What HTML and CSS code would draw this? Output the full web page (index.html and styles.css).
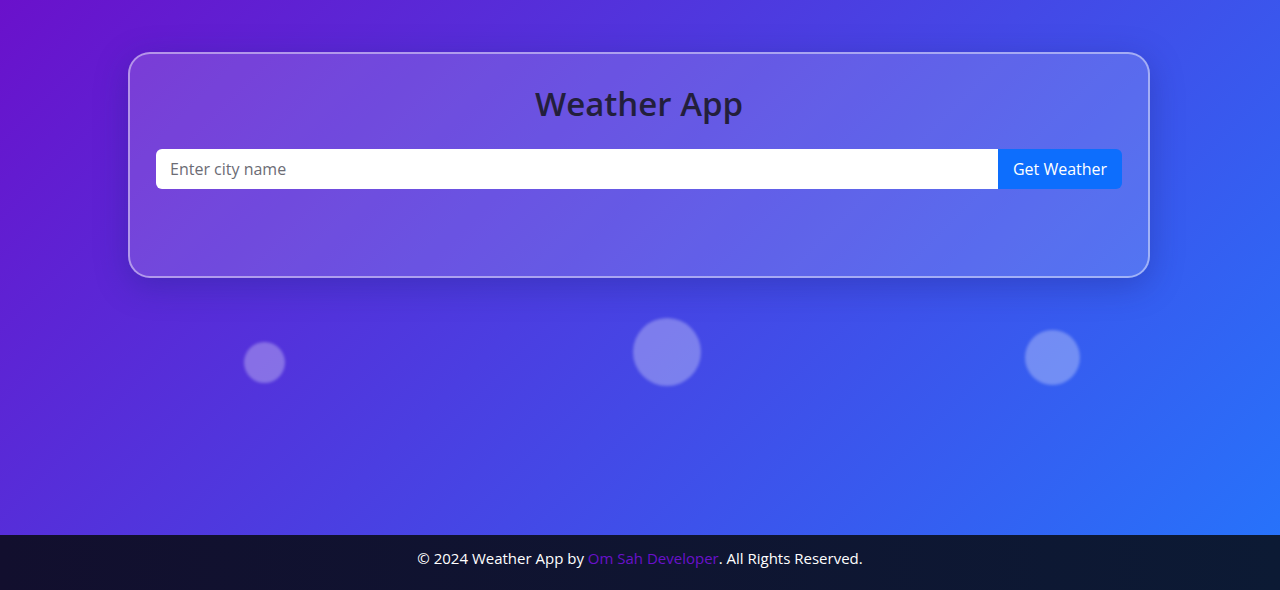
FILE: index.html
```html
<!DOCTYPE html>
<html lang="en">
<head>
<meta charset="UTF-8">
<title>Weather App</title>
<link rel="stylesheet" href="styles.css">
</head>
<body>
  <main class="page">
    <section class="card">
      <h1 class="title">Weather App</h1>
      <form class="search">
        <input class="search-input" type="text" placeholder="Enter city name">
        <button class="search-btn" type="button">Get Weather</button>
      </form>
      <div class="result"></div>
    </section>
    <div class="bubbles">
      <span class="bubble bubble-sm"></span>
      <span class="bubble bubble-lg"></span>
      <span class="bubble bubble-md"></span>
    </div>
  </main>
  <footer class="footer">
    <p>&copy; 2024 Weather App by <a class="footer-link" href="#">Om Sah Developer</a>. All Rights Reserved.</p>
  </footer>
</body>
</html>
```
FILE: styles.css
```css
* { box-sizing: border-box; }
html, body { height: 100%; }
body {
  margin: 0;
  min-height: 100vh;
  display: flex;
  flex-direction: column;
  font-family: "Open Sans", "Noto Sans", sans-serif;
  background: linear-gradient(135deg, #6a11cb 0%, #2575fc 100%);
  color: #fff;
}
.page {
  flex: 1;
  display: flex;
  flex-direction: column;
  align-items: flex-start;
  padding: 52px 0 0 128px;
  position: relative;
}
.card {
  width: 1022px;
  height: 226px;
  padding: 25px 26px;
  border: 2px solid rgba(255, 255, 255, 0.45);
  border-radius: 22px;
  background: rgba(255, 255, 255, 0.15);
  box-shadow: 0 8px 32px rgba(31, 38, 135, 0.37);
  display: flex;
  flex-direction: column;
  align-items: stretch;
}
.title {
  margin: 3px 0 23px;
  text-align: center;
  font-size: 33px;
  font-weight: 600;
  line-height: 44px;
  color: #231f3c;
}
.search {
  display: flex;
  height: 40px;
  margin: 0;
}
.search-input {
  flex: 1;
  border: none;
  border-radius: 6px 0 0 6px;
  background: #fff;
  padding: 0 14px;
  font-family: inherit;
  font-size: 16px;
  outline: none;
}
.search-input::placeholder { color: #6c6c75; }
.search-btn {
  width: 124px;
  border: none;
  border-radius: 0 6px 6px 0;
  background: #0d6efd;
  color: #fff;
  font-family: inherit;
  font-size: 16px;
  padding: 0;
}
.bubbles {
  width: 100%;
  height: 110px;
  position: relative;
}
.bubble {
  position: absolute;
  border-radius: 50%;
  background: rgba(255, 255, 255, 0.3);
  filter: blur(1.5px);
}
.bubble-sm { left: 116px; top: 64px; width: 41px; height: 41px; }
.bubble-lg { left: 505px; top: 40px; width: 68px; height: 68px; }
.bubble-md { left: 897px; top: 52px; width: 55px; height: 55px; }
.footer {
  height: 55px;
  display: flex;
  align-items: flex-start;
  justify-content: center;
  padding-top: 13px;
  background: linear-gradient(90deg, #120f2e 0%, #0c1a34 100%);
  color: #fff;
  font-size: 15px;
}
.footer p { margin: 0; line-height: 20px; }
.footer-link {
  color: #6a11cb;
  text-decoration: none;
}
```
